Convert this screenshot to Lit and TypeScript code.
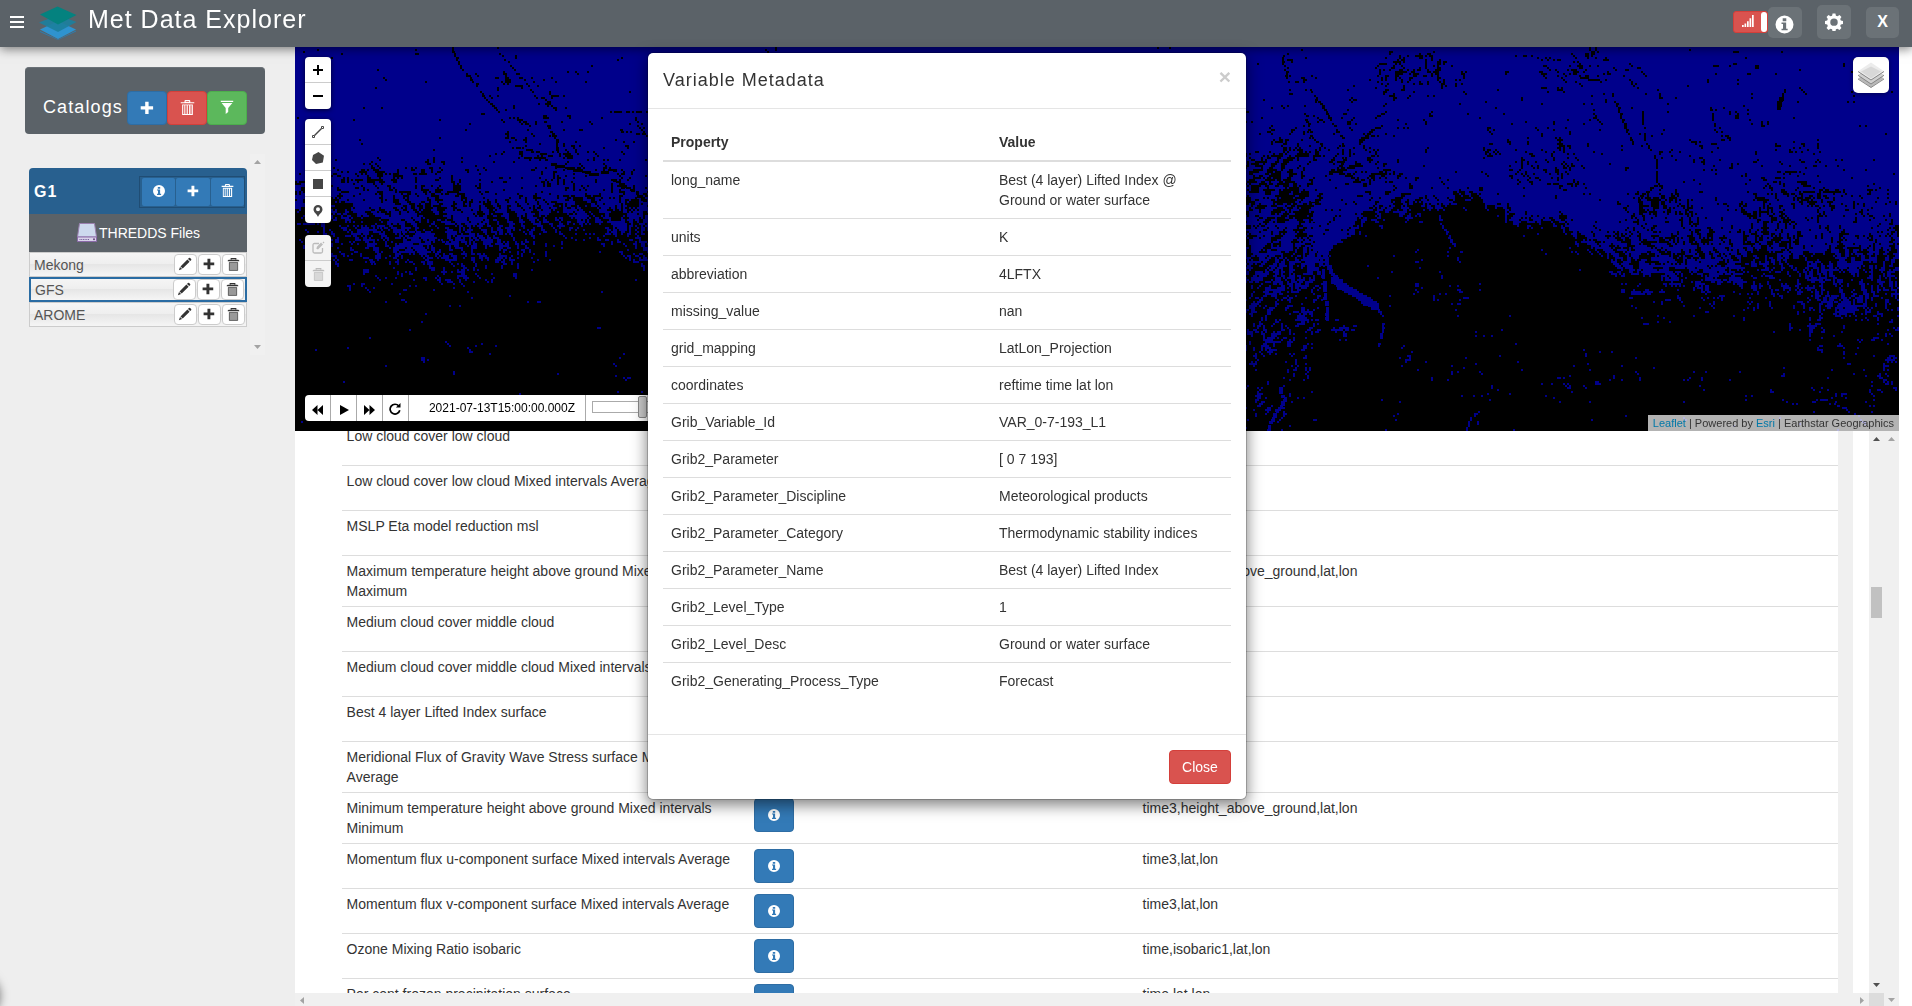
import { LitElement, html, css, svg, type TemplateResult } from 'lit';
import { customElement, query } from 'lit/decorators.js';

/* ---------- data ---------- */

const metadata: [string, string][] = [
  ['long_name', 'Best (4 layer) Lifted Index @ Ground or water surface'],
  ['units', 'K'],
  ['abbreviation', '4LFTX'],
  ['missing_value', 'nan'],
  ['grid_mapping', 'LatLon_Projection'],
  ['coordinates', 'reftime time lat lon'],
  ['Grib_Variable_Id', 'VAR_0-7-193_L1'],
  ['Grib2_Parameter', '[ 0 7 193]'],
  ['Grib2_Parameter_Discipline', 'Meteorological products'],
  ['Grib2_Parameter_Category', 'Thermodynamic stability indices'],
  ['Grib2_Parameter_Name', 'Best (4 layer) Lifted Index'],
  ['Grib2_Level_Type', '1'],
  ['Grib2_Level_Desc', 'Ground or water surface'],
  ['Grib2_Generating_Process_Type', 'Forecast'],
];

const variables: [string, string][] = [
  ['Low cloud cover low cloud', 'time,lat,lon'],
  ['Low cloud cover low cloud Mixed intervals Average', 'time3,lat,lon'],
  ['MSLP Eta model reduction msl', 'time,lat,lon'],
  ['Maximum temperature height above ground Mixed intervals Maximum', 'time3,height_above_ground,lat,lon'],
  ['Medium cloud cover middle cloud', 'time,lat,lon'],
  ['Medium cloud cover middle cloud Mixed intervals Average', 'time3,lat,lon'],
  ['Best 4 layer Lifted Index surface', 'time,lat,lon'],
  ['Meridional Flux of Gravity Wave Stress surface Mixed intervals Average', 'time3,lat,lon'],
  ['Minimum temperature height above ground Mixed intervals Minimum', 'time3,height_above_ground,lat,lon'],
  ['Momentum flux u-component surface Mixed intervals Average', 'time3,lat,lon'],
  ['Momentum flux v-component surface Mixed intervals Average', 'time3,lat,lon'],
  ['Ozone Mixing Ratio isobaric', 'time,isobaric1,lat,lon'],
  ['Per cent frozen precipitation surface', 'time,lat,lon'],
];

const files = ['Mekong', 'GFS', 'AROME'];

/* ---------- icons ---------- */

const icon = (body: TemplateResult, size = 14) =>
  html`<svg width=${size} height=${size} viewBox="0 0 14 14" fill="currentColor">${body}</svg>`;

const plus = svg`<path d="M5.2 .8h3.4v4.4h4.5v3.4h-4.5v4.4h-3.4v-4.4h-4.5v-3.4h4.5z"/>`;
const info = svg`<path fill-rule="evenodd" d="M7 1a6 6 0 1 1 0 12a6 6 0 0 1 0-12zM5.8 2.9v1.9h2.4v-1.9zM5 5.6v1h1v3.200h-1v1.100h4.100v-1.100h-1v-4.200z"/>`;
const trash = svg`<path fill-rule="evenodd" d="M4.200 2v-1q0-1 1-1h3.400q1 0 1 1v1h3.700v1.100h-12.600v-1.100zM5.300 1.900h3.200v-.8h-3.200zM2 4.100h10v9.900h-10zM3 5v8h1v-8zM5 5v8h1.200v-8zM7.300 5v8h1.200v-8zM9.800 5v8h1v-8z"/>`;
const trashSoft = svg`<path fill="none" stroke="currentColor" stroke-width="1.2" d="M4.500 2v-1.300h5v1.300"/><path d="M.8 2.600l1-.7h10.400l1 .7v.9h-12.400z"/><path d="M2.200 4.600h9.600v8.400q0 .8-.8.800h-8q-.8 0-.8-.8z" opacity=".5"/><path fill="none" stroke="currentColor" stroke-width=".6" d="M2.500 4.800h9v8.600h-9z"/>`;
const filter = svg`<path d="M.8 .8h12.400v1.300h-12.400zM1.600 2.900h10.800l-4.200 5.200v4l-2.500 1.800v-5.800z"/>`;
const pencil = svg`<path d="M10.900 1q.6-.6 1.200 0l1 1q.6.600 0 1.200l-.9.9-2.200-2.200zM9.400 2.500l2.200 2.200-6.900 6.900-2.200-2.200zM2 10l2.100 2.100-3.200 1.100z"/>`;
const signal = svg`<path d="M1 11h1.700v2h-1.700zM3.500 9.500h1.700v3.500h-1.700zM6 7.300h1.700v5.700h-1.700zM8.500 4.300h1.700v8.700h-1.700zM11 1h1.700v12h-1.700z"/>`;
const cog = svg`<path fill-rule="evenodd" d="M5.900 .3h2.200l.4 1.800 1.200.5 1.600-1 1.500 1.500-1 1.600.5 1.200 1.800.4v2.200l-1.800.4-.5 1.200 1 1.600-1.500 1.500-1.600-1-1.200.5-.4 1.800h-2.200l-.4-1.800-1.200-.5-1.600 1-1.500-1.500 1-1.600-.5-1.200-1.800-.4v-2.200l1.800-.4.5-1.200-1-1.600 1.500-1.500 1.600 1 1.200-.5zM7 4.200a2.900 2.900 0 1 0 0 5.800a2.900 2.900 0 0 0 0-5.800z"/>`;

const logo = html`<svg width="38" height="34" viewBox="0 0 38 34">
  <path d="M1 23.500L19 15l18 8.500-18 9.500z" fill="#2f93cf"/>
  <path d="M1 25L19 33.500 37 24.500v1L19 34 1 26z" fill="#2a7fb4"/>
  <path d="M0 16.500L19 9l18.500 7L19 26z" fill="#1c7f9d" opacity=".92"/>
  <path d="M1 8.500L18.500 .500 37.500 9 19 18.500z" fill="#04827f"/>
</svg>`;

const drive = html`<svg width="22" height="22" viewBox="0 0 22 22">
  <path d="M3.500 1.500h15l2 13.500h-19z" fill="#cdd9ee" stroke="#9a80b0" stroke-width="1"/>
  <path d="M1.500 15h19v4.500h-19z" fill="#d9d2ea" stroke="#8a6aa8" stroke-width="1"/>
  <path d="M3.500 17.500h10" stroke="#75629a" stroke-dasharray="1 .7"/>
  <circle cx="18" cy="17.300" r="1" fill="#66467f"/>
</svg>`;

const layersIcon = html`<svg width="26" height="26" viewBox="0 0 26 26">
  <path d="M0 16.500L13 7.500l13 9L13 25.500z" fill="#b9b9b9"/><path d="M0 17L13 25.500 26 17" fill="none" stroke="#8b8b8b"/>
  <path d="M0 13L13 4l13 9-13 9z" fill="#d0d0d0"/><path d="M0 13.300L13 22l13-8.700" fill="none" stroke="#848484"/>
  <path d="M0 9.300L13 .500l13 8.800-13 8.700z" fill="#ececec"/><path d="M3 9.500L13 4.500l10 5L13 16.500z" fill="#d8d8d8"/><path d="M0 9.500L13 18l13-8.500" fill="none" stroke="#848484"/>
</svg>`;

/* ---------- raster layer ---------- */

type Pt = [number, number];

/** [x, centre of the blue/black front, half width of the front] in map pixels */
const front: [number, number, number][] = [
  [0, 158, 34], [60, 160, 46], [110, 165, 50], [180, 168, 52], [250, 164, 42], [300, 160, 36], [345, 172, 44],
  [650, 200, 80], [960, 200, 120], [1010, 215, 100], [1024, 220, 70], [1032, 212, 12], [1048, 186, 10], [1074, 170, 12],
  [1108, 162, 13], [1185, 151, 10], [1202, 158, 10], [1224, 172, 13], [1288, 187, 16], [1322, 200, 26], [1348, 208, 60],
  [1420, 210, 62], [1500, 205, 66], [1604, 215, 66],
];

/** [x, y, rx, ry, weight]: positive patches darken, negative ones brighten */
const patches: [number, number, number, number, number][] = [
  [212, 28, 40, 32, 0.36], [230, 90, 45, 30, 0.3], [175, 122, 14, 7, 0.5], [290, 112, 50, 18, 0.62],
  [250, 65, 30, 20, 0.25], [80, 125, 26, 10, 0.4], [332, 80, 22, 20, 0.4], [335, 140, 22, 12, 0.3],
  [1130, 17, 44, 22, 0.68], [1280, 16, 45, 25, 0.5], [1235, 70, 45, 38, 0.36], [1105, 62, 35, 32, 0.34],
  [1010, 100, 50, 60, 0.34], [1075, 115, 35, 35, 0.46], [990, 130, 48, 45, 0.32], [1110, 138, 55, 18, 0.4],
  [1265, 115, 28, 35, 0.62], [1205, 120, 40, 22, 0.4], [1360, 155, 30, 16, 0.6], [1415, 110, 32, 18, 0.36],
  [1503, 125, 42, 34, 0.48], [1570, 150, 25, 18, 0.3], [1430, 55, 32, 30, 0.34], [1350, 40, 60, 35, 0.2],
  [1455, 15, 30, 15, 0.3], [1555, 22, 20, 15, 0.3], [1000, 20, 25, 25, 0.3],
  [75, 190, 60, 22, -0.2], [130, 205, 45, 26, -0.24], [205, 200, 38, 26, -0.2], [100, 312, 35, 12, -0.3],
  [190, 308, 40, 14, -0.34], [335, 330, 24, 22, -0.4], [80, 240, 60, 24, -0.26], [160, 235, 60, 28, -0.3], [345, 210, 12, 24, -0.6],
  [1052, 280, 18, 10, -0.75], [985, 245, 35, 55, -0.15], [975, 365, 28, 18, -0.45], [1300, 320, 45, 24, -0.32],
  [1100, 205, 40, 16, -0.34], [1150, 250, 40, 36, -0.32], [1335, 220, 20, 18, -0.4], [1210, 345, 60, 16, -0.26],
  [1555, 256, 30, 10, -0.65], [1515, 280, 25, 12, -0.55], [1540, 345, 48, 28, -0.3], [1590, 320, 18, 36, -0.4],
  [1405, 218, 28, 8, -0.5], [1400, 325, 40, 12, -0.2], [1115, 315, 30, 6, -0.5], [480, 372, 400, 6, -0.2],
  [300, 215, 45, 20, 0.4], [1240, 225, 70, 26, 0.25], [1060, 220, 18, 22, 0.3], [1430, 280, 70, 25, 0.3],
];

const darkLines: { w: number; gap: number; pts: Pt[] }[] = [
  { w: 3, gap: 0.25, pts: [[157, 0], [166, 20], [181, 36], [190, 50], [203, 63]] },
  { w: 2, gap: 0.5, pts: [[208, 8], [222, 25], [236, 40], [244, 55]] },
  { w: 3, gap: 0.2, pts: [[250, 74], [261, 92], [261, 102], [251, 111], [224, 110]] },
  { w: 3, gap: 0.3, pts: [[215, 99], [235, 102], [250, 106]] },
  { w: 4, gap: 0.2, pts: [[257, 116], [280, 121], [300, 126], [320, 121]] },
  { w: 4, gap: 0.3, pts: [[320, 132], [338, 142], [350, 152]] },
  { w: 2, gap: 0.3, pts: [[316, 64], [352, 64]] },
  { w: 2, gap: 0.3, pts: [[320, 82], [352, 87]] },
  { w: 2, gap: 0.4, pts: [[986, 6], [994, 33]] },
  { w: 3, gap: 0.25, pts: [[1016, 42], [1031, 64], [1047, 90], [1049, 118]] },
  { w: 3, gap: 0.4, pts: [[1009, 58], [1016, 88], [1035, 104]] },
  { w: 3, gap: 0.25, pts: [[1318, 46], [1326, 68], [1339, 98]] },
  { w: 2, gap: 0.1, pts: [[1348, 62], [1350, 92], [1361, 112], [1363, 136], [1344, 150], [1347, 168]] },
  { w: 2, gap: 0.15, pts: [[1416, 60], [1421, 84]] },
  { w: 5, gap: 0, pts: [[1486, 50], [1484, 55], [1484, 60]] },
  { w: 2, gap: 0, pts: [[1490, 41], [1485, 55]] },
  { w: 2, gap: 0.1, pts: [[1285, 30], [1305, 33]] },
];

const blueLines: { w: number; gap: number; pts: Pt[] }[] = [
  { w: 4, gap: 0.25, pts: [[1046, 184], [1034, 200]] },
  { w: 5, gap: 0.15, pts: [[1030, 206], [1034, 220], [1042, 230]] },
  { w: 8, gap: 0.15, pts: [[1040, 230], [1052, 240], [1064, 246], [1080, 256]] },
  { w: 3, gap: 0.15, pts: [[1080, 257], [1087, 268], [1088, 282], [1083, 297]] },
  { w: 4, gap: 0.2, pts: [[1018, 150], [1022, 180], [1024, 204], [1030, 235], [1032, 272]] },
  { w: 3, gap: 0.2, pts: [[1146, 176], [1158, 195], [1166, 204]] },
  { w: 4, gap: 0.15, pts: [[985, 340], [990, 352], [980, 366], [973, 382]] },
  { w: 2, gap: 0.2, pts: [[1172, 382], [1176, 370], [1184, 364]] },
  { w: 3, gap: 0.3, pts: [[1530, 246], [1545, 257], [1570, 258]] },
  { w: 2, gap: 0.4, pts: [[1475, 342], [1495, 356], [1530, 352], [1560, 366], [1575, 380]] },
  { w: 3, gap: 0.2, pts: [[55, 200], [75, 212], [80, 216]] },
  { w: 3, gap: 0.4, pts: [[86, 180], [130, 186], [165, 200]] },
];

const cellHash = (x: number, y: number): number => {
  let h = Math.imul(x | 0, 374761393) + Math.imul(y | 0, 668265263);
  h = Math.imul(h ^ (h >>> 13), 1274126177);
  return ((h ^ (h >>> 16)) >>> 0) / 4294967296;
};

const smoothNoise = (x: number, y: number): number => {
  const xi = Math.floor(x);
  const yi = Math.floor(y);
  const u = x - xi;
  const v = y - yi;
  const a = cellHash(xi, yi);
  const b = cellHash(xi + 1, yi);
  const c = cellHash(xi, yi + 1);
  const d = cellHash(xi + 1, yi + 1);
  return (a + (b - a) * u) * (1 - v) + (c + (d - c) * u) * v;
};

/** Noise stretched along one direction, which gives short parallel streaks. */
const streaks = (x: number, y: number, angle: number): number => {
  const u = x * Math.cos(angle) + y * Math.sin(angle);
  const v = -x * Math.sin(angle) + y * Math.cos(angle);
  return smoothNoise(u / 7, v / 2.5) - 0.5;
};

function paintRaster(canvas: HTMLCanvasElement) {
  const ctx = canvas.getContext('2d');
  if (!ctx) return;
  const { width, height } = canvas;
  ctx.fillStyle = '#000';
  ctx.fillRect(0, 0, width, height);
  ctx.fillStyle = '#00008b';
  const cell = 2;
  for (let x = 0; x < width; x += cell) {
    let k = 0;
    while (k < front.length - 2 && front[k + 1][0] < x) k++;
    const [x0, b0, w0] = front[k];
    const [x1, b1, w1] = front[k + 1];
    const t = Math.min(1, (x - x0) / (x1 - x0));
    const mid = b0 + (b1 - b0) * t + (smoothNoise(x / 14, 3) - 0.5) * 14;
    const half = w0 + (w1 - w0) * t;
    for (let y = 0; y < height; y += cell) {
      let s = (y - mid) / half;
      s = s < 0 ? Math.max(-1.1, s * 0.85) : Math.min(1.14, s * 0.7);
      for (const [px, py, rx, ry, w] of patches) {
        const dx = (x - px) / rx;
        const dy = (y - py) / ry;
        const q = dx * dx + dy * dy;
        if (q < 3) s += w * Math.exp(-q) * 1.1;
      }
      // a few fixed bearings per region keep each streak straight
      const sector = Math.floor(smoothNoise(x / 55 + 9, y / 45) * 4);
      const lean = x < 500 ? 0.75 : x > 1130 && x < 1330 ? 0.7 : x < 1130 ? -0.9 : 1.1;
      const angle = lean + [-0.9, 0, 0.25, 0.8][sector];
      const n =
        streaks(x, y, angle) * 1.9 +
        (cellHash(x, y) - 0.5) * 0.95 +
        (smoothNoise(x / 16 + 40, y / 12) - 0.5) * 0.6;
      if (n + s < 0) ctx.fillRect(x, y, cell, cell);
    }
  }
  const stroke = (lines: typeof darkLines, color: string) => {
    ctx.fillStyle = color;
    for (const { w, gap, pts } of lines) {
      for (let i = 1; i < pts.length; i++) {
        const [ax, ay] = pts[i - 1];
        const [bx, by] = pts[i];
        const steps = Math.max(1, Math.round(Math.hypot(bx - ax, by - ay) / 2));
        for (let j = 0; j <= steps; j++) {
          const x = Math.round((ax + ((bx - ax) * j) / steps) / 2) * 2;
          const y = Math.round((ay + ((by - ay) * j) / steps) / 2) * 2;
          if (cellHash(x + 7, y + i) < gap) continue;
          const r = Math.max(2, w - (cellHash(x, y + 5) > 0.5 ? 1 : 0));
          ctx.fillRect(x - (r >> 1), y, r, Math.max(2, r - 1));
        }
      }
    }
  };
  stroke(darkLines, '#000');
  stroke(blueLines, '#00008b');
}

/* ---------- map ---------- */

@customElement('weather-map')
export class WeatherMap extends LitElement {
  @query('canvas') private canvas!: HTMLCanvasElement;

  static styles = css`
    :host { display: block; position: relative; height: 384px; width: 1604px; overflow: hidden; background: #000; font: 12px "Liberation Sans", Arial, sans-serif; }
    * { box-sizing: border-box; }
    canvas { display: block; }
    svg { display: block; }
    .tools { position: absolute; left: 10px; top: 10px; display: flex; flex-direction: column; gap: 10px; }
    .bar { width: 26px; border-radius: 4px; background: #fff; box-shadow: 0 1px 5px rgba(0, 0, 0, .65); overflow: hidden; color: #464646; }
    .bar.edit { margin-top: 2px; background: #f4f4f4; color: #bbb; }
    .tool { height: 26px; display: flex; align-items: center; justify-content: center; border-bottom: 1px solid #ccc; }
    .tool:last-child { border-bottom: 0; }
    .tool.pin { padding-top: 1px; }
    .layers { position: absolute; right: 10px; top: 10px; width: 36px; height: 36px; border-radius: 5px; background: #fff; box-shadow: 0 1px 5px rgba(0, 0, 0, .4); display: flex; align-items: center; justify-content: center; }
    .time { position: absolute; left: 10px; bottom: 10px; height: 26px; display: flex; background: #fff; border-radius: 4px; color: #000; overflow: hidden; }
    .cell { width: 26px; border-right: 1px solid #aaa; display: flex; align-items: center; justify-content: center; padding-top: 3px; }
    .cell.play { padding-left: 1px; }
    .cell.loop { padding: 1px 1px 0 0; }
    .cell.date { width: 177px; padding: 0 0 1px 10px; }
    .slide { width: 300px; padding: 6px; position: relative; }
    .track { height: 12px; border: 1px solid #aaa; background: #fff; }
    .knob { position: absolute; left: 52px; top: 1px; width: 9px; height: 22px; border: 1px solid #888; border-radius: 2px; background: #ccc; }
    .credit { position: absolute; right: 0; bottom: 0; height: 16px; padding: 0 5px; font-size: 11px; line-height: 16px; background: rgba(255, 255, 255, .7); color: #333; white-space: nowrap; }
    .link { color: #0078a8; }
  `;

  firstUpdated() {
    paintRaster(this.canvas);
  }

  render() {
    return html`
      <canvas width="1604" height="384"></canvas>
      <div class="tools">
        <div class="bar">
          <div class="tool"><svg width="10" height="10"><path d="M5 0v10M0 5h10" stroke="#000" stroke-width="2"/></svg></div>
          <div class="tool"><svg width="10" height="10"><path d="M0 5h10" stroke="#000" stroke-width="2"/></svg></div>
        </div>
        <div class="bar">
          <div class="tool"><svg width="12" height="12" fill="none" stroke="currentColor"><path d="M2.500 9.500l7-7" stroke-width="1.500"/><path d="M.5 9.500h2v2h-2zM9.500 .5h2v2h-2z"/></svg></div>
          <div class="tool"><svg width="12" height="12" fill="currentColor"><path d="M6.500 0L12 3.800 10.800 10.500 4 12 0 8 1 3z"/></svg></div>
          <div class="tool"><svg width="10" height="10" fill="currentColor"><path d="M0 0h10v10h-10z"/></svg></div>
          <div class="tool pin"><svg width="10" height="12" fill="currentColor"><path fill-rule="evenodd" d="M5 0a4.500 4.500 0 0 1 4.500 4.500c0 3-3.500 4.500-4.500 7.500c-1-3-4.500-4.500-4.500-7.500a4.500 4.500 0 0 1 4.500-4.500zM5 2.300a2 2 0 1 0 0 4a2 2 0 0 0 0-4z"/></svg></div>
        </div>
        <div class="bar edit">
          <div class="tool"><svg width="13" height="13" fill="none" stroke="currentColor" stroke-width="1.300"><path d="M7 2.500h-4.500q-1.500 0-1.500 1.500v6.500q0 1.500 1.500 1.500h6.500q1.500 0 1.500-1.500v-3.500"/><path d="M5 8l.5-2 4-4M5.500 8l5-5" /><path d="M11 1l1 1"/></svg></div>
          <div class="tool">${icon(trashSoft, 13)}</div>
        </div>
      </div>
      <div class="layers">${layersIcon}</div>
      <div class="time">
        <div class="cell"><svg width="11" height="10"><path d="M5.500 0v10L0 5zM11 0v10L5.500 5z"/></svg></div>
        <div class="cell play"><svg width="9" height="10"><path d="M0 0l9 5-9 5z"/></svg></div>
        <div class="cell"><svg width="11" height="10"><path d="M0 0v10l5.500-5zM5.500 0v10L11 5z"/></svg></div>
        <div class="cell loop"><svg width="12" height="12" fill="none" stroke="#000" stroke-width="1.700"><path d="M9.800 3a4.900 4.900 0 1 0 1 4.300"/><path d="M11.500 0v4.600h-4.600z" fill="#000" stroke="none"/></svg></div>
        <div class="cell date">2021-07-13T15:00:00.000Z</div>
        <div class="slide"><div class="track"></div><div class="knob"></div></div>
      </div>
      <div class="credit"><span class="link">Leaflet</span> | Powered by <span class="link">Esri</span> | Earthstar Geographics</div>
    `;
  }
}

/* ---------- page ---------- */

@customElement('app-root')
export class AppRoot extends LitElement {
  static styles = css`
    :host { display: flex; flex-direction: column; position: relative; width: 1912px; height: 1006px; overflow: hidden; background: #fff; color: #333; font: 14px/20px "Liberation Sans", Arial, sans-serif; }
    * { box-sizing: border-box; }
    svg { display: block; flex: none; }

    .header { height: 47px; flex: none; display: flex; align-items: flex-start; background: #5b6268; box-shadow: 0 2px 10px rgba(0, 0, 0, .5); position: relative; z-index: 2; color: #fff; padding: 0 13px 0 10px; }
    .burger { width: 14px; height: 12px; margin-top: 16px; display: flex; flex-direction: column; justify-content: space-between; }
    .burger i { height: 2px; background: #fff; }
    .logo { margin: 6px 0 0 15px; }
    .title { margin: 5px 0 0 11px; font-size: 25px; line-height: 29px; letter-spacing: 1px; flex: 1; }
    .toggle { margin-top: 11px; width: 35px; height: 22px; border: 1px solid #d43f3a; background: #d9534f; border-radius: 3px; display: flex; align-items: center; justify-content: space-between; padding-left: 7px; }
    .toggle svg { margin-bottom: 2px; }
    .knob { width: 6px; height: 20px; background: #fff; border-radius: 3px; }
    .hbtn { width: 34px; height: 31px; margin-top: 7px; border-radius: 5px; background: #6b7277; display: flex; align-items: center; justify-content: center; font-weight: bold; font-size: 16px; }
    .hbtn.inf { padding: 3px 1px 0 0; }
    .hbtn.gear { height: 34px; margin: 5px 15px 0; padding-right: 1px; }
    .hbtn.exit { width: 33px; padding-bottom: 1px; }

    .body { flex: 1; display: flex; min-height: 0; }
    .side { width: 295px; flex: none; background: #eee; padding: 20px 30px 0 25px; position: relative; overflow: hidden; }
    .corner { position: absolute; left: -42px; bottom: -8px; width: 40px; height: 40px; border-radius: 20px; box-shadow: 0 2px 10px 2px rgba(0, 0, 0, .5); }
    .catalogs { height: 67px; border-radius: 4px; background: #5b6268; border-top: 1px solid #6a7177; display: flex; align-items: flex-start; padding: 23px 18px 0; color: #fff; }
    .cat-title { font-size: 18px; letter-spacing: 1.100px; width: 84px; line-height: 33px; }
    .btn { display: flex; align-items: center; justify-content: center; width: 40px; height: 34px; border-radius: 4px; border: 1px solid #2e6da4; background: #337ab7; color: #fff; }
    .btn.add { padding-right: 1px; }
    .btn.red { background: #d9534f; border-color: #d43f3a; }
    .btn.drop { padding-bottom: 2px; }
    .btn.green { background: #5cb85c; border-color: #4cae4c; padding: 0 1px 2px 0; }
    .list { margin-top: 20px; height: 201px; display: flex; }
    .group { width: 218px; margin: 14px 3px 0 4px; }
    .ghead { height: 46px; border-radius: 4px 4px 0 0; background: #28608f; color: #fff; display: flex; align-items: center; justify-content: space-between; padding: 1px 2px 0 5px; font-weight: bold; font-size: 16px; letter-spacing: 1px; }
    .gbtns { width: 106px; height: 32px; border: 1px solid #204d74; display: flex; padding: 1px 0 1px 2px; gap: 1px; }
    .gbtns span { flex: 1; background: #337ab7; display: flex; align-items: center; justify-content: center; border-radius: 2px; padding: 0 0 2px 0; }
    .gsub { height: 38px; background: #5b6268; color: #fff; display: flex; align-items: center; padding-left: 47px; gap: 1px; }
    .file { height: 25px; border: 1px solid #ccc; display: flex; align-items: center; color: #555; padding: 0 1px 0 4px; background: linear-gradient(#f5f5f5, #eeeeee 50%, #e6e6e6 50%, #f5f5f5); gap: 1px; }
    .file.on { border: 2px solid #2a6ca3; }
    .file span { flex: 1; }
    .file b { width: 23px; height: 21px; border: 1px solid #ccc; border-radius: 4px; background: #fff; display: flex; align-items: center; justify-content: center; color: #333; padding: 0 0 1px; }
    .file b.shift { padding: 0 1px 1px 0; }
    .vscroll { width: 15px; background: #f0f0f0; display: flex; flex-direction: column; justify-content: space-between; align-items: center; padding: 6px 0; color: #a3a3a3; }

    .main { width: 1604px; display: flex; flex-direction: column; }
    .panel { flex: 1; display: flex; min-height: 0; }
    .left { flex: 1; display: flex; flex-direction: column; min-width: 0; }
    .view { height: 562px; flex: none; overflow: hidden; display: flex; padding-left: 46.600px; }
    .grid { width: 1496.400px; flex: none; margin-top: -11px; }
    .row { display: grid; grid-template-columns: 407px 389px 1fr; border-top: 1px solid #ddd; min-height: 45px; }
    .row > div { padding: 5px; }
    .stripe { width: 15px; background: #f0f0f0; }
    .hscroll { flex: 1; background: #f0f0f0; display: flex; justify-content: space-between; padding: 4px 5px 0 5px; color: #a3a3a3; }
    .track { width: 15px; background: #f0f0f0; display: flex; flex-direction: column; align-items: center; position: relative; height: 562px; padding: 6px 0 6px; color: #505050; }
    .thumb { width: 11px; height: 31px; background: #c1c1c1; margin: 146px 0 auto; }
    .outer { height: 575px; justify-content: space-between; padding-bottom: 4px; color: #a3a3a3; }
    .mid { width: 15px; background: #dcdcdc; }

    .modal { position: absolute; z-index: 3; left: 647px; top: 52px; width: 600px; border: 1px solid rgba(0, 0, 0, .2); border-radius: 6px; background: #fff; background-clip: padding-box; box-shadow: 0 5px 15px rgba(0, 0, 0, .5); }
    .mhead { height: 56px; border-bottom: 1px solid #e5e5e5; padding: 15px 15px 0; display: flex; justify-content: space-between; }
    .mtitle { font-size: 18px; letter-spacing: 1px; line-height: 24px; }
    .x { font-size: 21px; line-height: 20px; font-weight: bold; color: #ccc; margin-top: -1px; }
    .mbody { padding: 15px 15px 35px; }
    .prop { display: grid; grid-template-columns: 328px 240px; border-top: 1px solid #ddd; }
    .prop > div { padding: 8px; }
    .prop.first { border-top: 2px solid #ddd; }
    .prop.th { border: 0; font-weight: bold; }
    .mfoot { border-top: 1px solid #e5e5e5; padding: 15px; display: flex; justify-content: flex-end; }
    .mfoot .btn { width: 62px; }
  `;

  private arrow(dir: 'up' | 'down' | 'left' | 'right') {
    const d = { up: 'M0 4L3.500 0 7 4z', down: 'M0 0h7L3.500 4z', left: 'M4 0v7L0 3.500z', right: 'M0 0v7l4-3.500z' }[dir];
    const wide = dir === 'up' || dir === 'down';
    return html`<svg width=${wide ? 7 : 4} height=${wide ? 4 : 7} fill="currentColor"><path d=${d}/></svg>`;
  }

  render() {
    return html`
      <div class="header">
        <div class="burger"><i></i><i></i><i></i></div>
        <div class="logo">${logo}</div>
        <div class="title">Met Data Explorer</div>
        <div class="toggle">${icon(signal, 14)}<div class="knob"></div></div>
        <div class="hbtn inf">${icon(info, 21)}</div>
        <div class="hbtn gear">${icon(cog, 18)}</div>
        <div class="hbtn exit">X</div>
      </div>
      <div class="body">
        <div class="side">
          <div class="catalogs">
            <div class="cat-title">Catalogs</div>
            <div class="btn add">${icon(plus)}</div>
            <div class="btn red drop">${icon(trash, 15)}</div>
            <div class="btn green">${icon(filter)}</div>
          </div>
          <div class="list">
            <div class="group">
              <div class="ghead">G1<div class="gbtns"><span>${icon(info)}</span><span>${icon(plus, 12)}</span><span>${icon(trash, 13)}</span></div></div>
              <div class="gsub">${drive}THREDDS Files</div>
              ${files.map(
                (f) => html`<div class="file ${f === 'GFS' ? 'on' : ''}"><span>${f}</span><b class="shift">${icon(pencil)}</b><b class="shift">${icon(plus, 12)}</b><b>${icon(trashSoft, 13)}</b></div>`,
              )}
            </div>
            <div class="vscroll">${this.arrow('up')}${this.arrow('down')}</div>
          </div>
          <div class="corner"></div>
        </div>
        <div class="main">
          <weather-map></weather-map>
          <div class="panel">
            <div class="left">
              <div class="view">
                <div class="grid">
                  ${variables.map(
                    ([name, dims]) => html`<div class="row"><div>${name}</div><div><div class="btn">${icon(info)}</div></div><div>${dims}</div></div>`,
                  )}
                </div>
                <div class="stripe"></div>
              </div>
              <div class="hscroll">${this.arrow('left')}${this.arrow('right')}</div>
            </div>
            <div class="mid"><div class="track">${this.arrow('up')}<div class="thumb"></div>${this.arrow('down')}</div></div>
            <div class="track outer">${this.arrow('up')}${this.arrow('down')}</div>
          </div>
        </div>
      </div>
      <div class="modal">
        <div class="mhead"><div class="mtitle">Variable Metadata</div><div class="x">×</div></div>
        <div class="mbody">
          <div class="prop th"><div>Property</div><div>Value</div></div>
          ${metadata.map(([k, v], i) => html`<div class="prop ${i ? '' : 'first'}"><div>${k}</div><div>${v}</div></div>`)}
        </div>
        <div class="mfoot"><div class="btn red">Close</div></div>
      </div>
    `;
  }
}
